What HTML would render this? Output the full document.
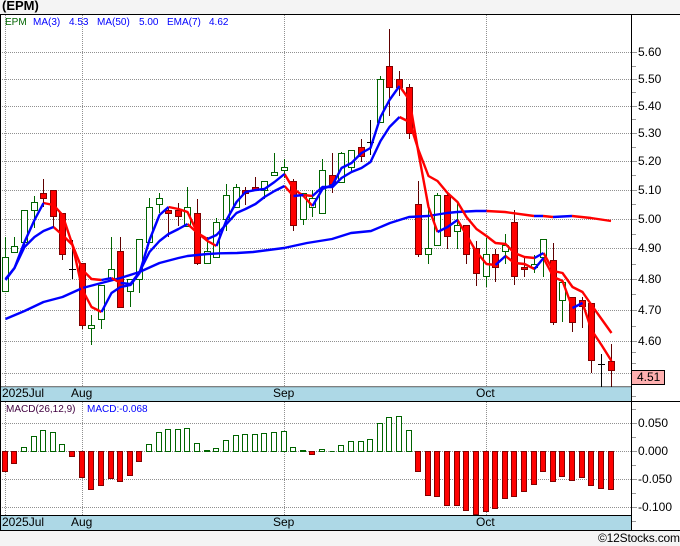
<!DOCTYPE html>
<html><head><meta charset="utf-8"><title>EPM</title>
<style>
html,body{margin:0;padding:0;background:#fff;width:680px;height:546px;overflow:hidden}
svg{display:block}
text{font-family:"Liberation Sans",Arial,sans-serif}
</style></head><body>
<svg width="680" height="546" viewBox="0 0 680 546" xmlns="http://www.w3.org/2000/svg">
<rect width="680" height="546" fill="#fff"/>
<rect width="680" height="14" fill="#f4f4f4"/>
<rect y="531" width="680" height="15" fill="#f4f4f4"/>
<text x="2" y="10" font-size="13" font-weight="bold" fill="#000">(EPM)</text>

<g stroke="#909090" stroke-width="1" stroke-dasharray="1 1" fill="none">
<path d="M0 52.5H632M0 79.5H632M0 106.5H632M0 133.5H632M0 161.5H632M0 190.5H632M0 219.5H632M0 248.5H632M0 279.5H632M0 310.5H632M0 341.5H632M0 373.5H632"/>
<path d="M0 423.5H632M0 451.5H632M0 479.5H632M0 507.5H632"/>
<path d="M5.5 15V387M82.5 15V387M284.5 15V387M486.5 15V387M5.5 402V521M82.5 402V521M284.5 402V521M486.5 402V521"/>
</g>

<!-- bands -->
<rect x="0" y="387" width="632" height="14" fill="#add8e6"/>
<rect x="0" y="515" width="632" height="15" fill="#add8e6"/>

<!-- candles -->
<path fill="none" stroke="#600000" d="M43.5 179V207M53.5 190V227M62.5 213V260M82.5 263V329M120.5 237V307M168.5 207V237M178.5 203V226M197.5 199V265M245.5 187V205M255.5 177V190M293.5 179V231M332.5 153V193M361.5 139V162M389.5 29V116M399.5 71V96M409.5 84V139M418.5 181V257M447.5 192V249M466.5 225V264M476.5 241V286M495.5 249V282M514.5 210V285M524.5 257V277M553.5 243V325M572.5 297V332M582.5 297V328M591.5 303V373M611.5 344V387"/>
<path fill="none" stroke="#006400" d="M5.5 237V291M14.5 237V253M24.5 210V245M34.5 196V228M91.5 315V345M101.5 285V329M111.5 237V280M130.5 279V307M139.5 239V293M149.5 198V242M159.5 193V213M187.5 187V226M207.5 237V263M216.5 218V257M226.5 184V231M236.5 184V207M264.5 181V199M274.5 153V175M284.5 159V178M303.5 193V225M312.5 190V217M322.5 159V213M341.5 152V183M351.5 150V172M380.5 76V122M428.5 208V264M437.5 193V245M457.5 203V249M486.5 238V287M505.5 234V264M534.5 255V273M543.5 239V277M562.5 282V322"/>
<path fill="none" stroke="#000" d="M72.5 240V279M69 269.5H76M370.5 120V155M367 142.5H374M601.5 354V387M598 364.5H605"/>
<path fill="#f00" stroke="#800000" d="M40.5 193.5h6v5h-6zM50.5 190.5h6v26h-6zM59.5 213.5h6v41h-6zM79.5 263.5h6v62h-6zM117.5 251.5h6v56h-6zM165.5 210.5h6v3h-6zM175.5 210.5h6v6h-6zM194.5 213.5h6v50h-6zM242.5 190.5h6v3h-6zM252.5 187.5h6v3h-6zM290.5 181.5h6v44h-6zM329.5 175.5h6v9h-6zM358.5 147.5h6v9h-6zM386.5 66.5h6v21h-6zM396.5 79.5h6v8h-6zM406.5 87.5h6v46h-6zM415.5 204.5h6v50h-6zM444.5 195.5h6v41h-6zM463.5 225.5h6v29h-6zM473.5 248.5h6v25h-6zM492.5 254.5h6v13h-6zM511.5 222.5h6v54h-6zM521.5 267.5h6v2h-6zM550.5 260.5h6v62h-6zM569.5 297.5h6v25h-6zM579.5 300.5h6v6h-6zM588.5 303.5h6v57h-6zM608.5 361.5h6v9h-6z"/>
<path fill="#fff" stroke="#006400" d="M2.5 257.5h6v34h-6zM11.5 246.5h6v6h-6zM21.5 210.5h6v32h-6zM31.5 202.5h6v8h-6zM88.5 325.5h6v3h-6zM98.5 285.5h6v34h-6zM108.5 269.5h6v9h-6zM127.5 279.5h6v12h-6zM136.5 239.5h6v40h-6zM146.5 207.5h6v35h-6zM156.5 198.5h6v6h-6zM184.5 207.5h6v19h-6zM204.5 251.5h6v12h-6zM213.5 222.5h6v35h-6zM223.5 195.5h6v24h-6zM233.5 187.5h6v20h-6zM261.5 181.5h6v9h-6zM271.5 172.5h6v3h-6zM281.5 167.5h6v3h-6zM300.5 193.5h6v26h-6zM309.5 198.5h6v9h-6zM319.5 170.5h6v43h-6zM338.5 153.5h6v29h-6zM348.5 150.5h6v17h-6zM377.5 79.5h6v43h-6zM425.5 248.5h6v6h-6zM434.5 195.5h6v50h-6zM454.5 225.5h6v6h-6zM483.5 254.5h6v22h-6zM502.5 245.5h6v6h-6zM531.5 264.5h6v3h-6zM540.5 239.5h6v18h-6zM559.5 282.5h6v18h-6z"/>

<!-- MA lines -->
<g fill="none" stroke-width="2.4" stroke-linejoin="round">
<g stroke="#0000ff">
<path d="M5.5 319L24.5 311L43.5 302L62.5 297L82.5 288L101.5 283L120.5 278L139.5 272L159.5 263L178.5 258L187.5 256L207.5 254L220 253.3L237 253L253 252L284 248L307 243L332 239L351 233L371 231L390 223L409 217L428 216L447 213L457 212L476 211L486.5 211M534 216L543 216M553 217L572 216"/>
</g>
<g stroke="#ff0000">
<path d="M486.5 211L505 212L534 216M543 216L553 217M572 216L591 218L611 221"/>
<path d="M53.5 227L62.5 235L72.5 245L82.5 270L91.5 279L101.5 280M111.5 278L120.5 283M187.5 224L197.5 233L207.5 239M284.5 186L293.5 196M303.5 195L312.5 196M399.5 117L409.5 122L418.5 150L428.5 176L437.5 181L447.5 193L457.5 202L466.5 217L476.5 229L486.5 236L495.5 243L505.5 244L514.5 253L524.5 257L534.5 258M543.5 253L553.5 271L562.5 273L572.5 287L582.5 292L591.5 305L601.5 319L611.5 333"/>
<path d="M43.5 203L53.5 205L62.5 215L72.5 245L82.5 290L91.5 307L101.5 312M168.5 207L178.5 209L187.5 212L197.5 233L207.5 241L216.5 246M284.5 174L293.5 189L303.5 196L312.5 206M399.5 86L409.5 100L418.5 153L428.5 207L437.5 232M457.5 220L466.5 235L476.5 252L486.5 264L495.5 265M505.5 256L514.5 263L524.5 264L534.5 269M543.5 258L553.5 277L562.5 281L572.5 308M582.5 303L591.5 330L601.5 345L611.5 361"/>
</g>
<g stroke="#0000ff">
<path d="M5.5 279L14.5 268L24.5 247L34.5 237L43.5 231L53.5 227M101.5 280L111.5 278M120.5 283L130.5 284L139.5 272L149.5 252L159.5 241L168.5 234L178.5 229L187.5 224M207.5 239L216.5 235L226.5 224L236.5 213L245.5 209L255.5 204L264.5 197L274.5 191L284.5 186M293.5 196L303.5 195M312.5 196L322.5 187L332.5 187L341.5 178L351.5 172L361.5 168L370.5 162L380.5 141L389.5 127L399.5 117M534.5 258L543.5 253"/>
<path d="M5.5 280L14.5 268L24.5 242L34.5 220L43.5 203M101.5 312L111.5 293L120.5 287L130.5 285L139.5 273L149.5 240L159.5 215L168.5 207M216.5 246L226.5 220L236.5 202L245.5 192L255.5 190L264.5 189L274.5 182L284.5 174M312.5 206L322.5 189L332.5 185L341.5 168L351.5 163L361.5 153L370.5 148L380.5 117L389.5 100L399.5 86M437.5 232L447.5 227L457.5 220M495.5 265L505.5 256M534.5 269L543.5 258M572.5 308L582.5 303"/>
</g>
</g>

<!-- MACD -->
<path fill="#f00" stroke="#800000" d="M2.5 451.5h5v20h-5zM11.5 451.5h5v12h-5zM69.5 451.5h5v5h-5zM79.5 451.5h5v26h-5zM88.5 451.5h5v38h-5zM98.5 451.5h5v34h-5zM108.5 451.5h5v27h-5zM117.5 451.5h5v30h-5zM127.5 451.5h5v24h-5zM136.5 451.5h5v10h-5zM309.5 451.5h5v3h-5zM415.5 451.5h5v20h-5zM425.5 451.5h5v44h-5zM434.5 451.5h5v45h-5zM444.5 451.5h5v54h-5zM454.5 451.5h5v54h-5zM463.5 451.5h5v59h-5zM473.5 451.5h5v63h-5zM483.5 451.5h5v60h-5zM492.5 451.5h5v57h-5zM502.5 451.5h5v47h-5zM511.5 451.5h5v45h-5zM521.5 451.5h5v40h-5zM531.5 451.5h5v33h-5zM540.5 451.5h5v20h-5zM550.5 451.5h5v30h-5zM559.5 451.5h5v25h-5zM569.5 451.5h5v29h-5zM579.5 451.5h5v26h-5zM588.5 451.5h5v34h-5zM598.5 451.5h5v37h-5zM608.5 451.5h5v38h-5z"/>
<path fill="#fff" stroke="#006400" d="M21.5 447.5h5V451.5h-5zM31.5 436.5h5V451.5h-5zM40.5 430.5h5V451.5h-5zM50.5 432.5h5V451.5h-5zM59.5 444.5h5V451.5h-5zM146.5 444.5h5V451.5h-5zM156.5 432.5h5V451.5h-5zM165.5 429.5h5V451.5h-5zM175.5 429.5h5V451.5h-5zM184.5 428.5h5V451.5h-5zM194.5 443.5h5V451.5h-5zM204.5 450.5h5V451.5h-5zM213.5 448.5h5V451.5h-5zM223.5 440.5h5V451.5h-5zM233.5 435.5h5V451.5h-5zM242.5 434.5h5V451.5h-5zM252.5 434.5h5V451.5h-5zM261.5 433.5h5V451.5h-5zM271.5 432.5h5V451.5h-5zM281.5 431.5h5V451.5h-5zM290.5 447.5h5V451.5h-5zM300.5 450.5h5V451.5h-5zM319.5 449.5h5V451.5h-5zM329.5 451.5h5V451.5h-5zM338.5 445.5h5V451.5h-5zM348.5 441.5h5V451.5h-5zM358.5 441.5h5V451.5h-5zM367.5 439.5h5V451.5h-5zM377.5 423.5h5V451.5h-5zM386.5 417.5h5V451.5h-5zM396.5 416.5h5V451.5h-5zM406.5 430.5h5V451.5h-5z"/>

<!-- frame -->
<path fill="none" stroke="#000" d="M0 14.5H680M0 401.5H680M0 515.5H632M0 530.5H680M631.5 14V530M.5 14V530"/>
<path fill="none" stroke="#000" stroke-width=".6" d="M0 386.8H632"/>
<path fill="none" stroke="#999" d="M632 52.5H637M632 79.5H637M632 106.5H637M632 133.5H637M632 161.5H637M632 190.5H637M632 219.5H637M632 248.5H637M632 279.5H637M632 310.5H637M632 341.5H637M632 66.5H636M632 92.5H636M632 119.5H636M632 147.5H636M632 175.5H636M632 204.5H636M632 234.5H636M632 264.5H636M632 294.5H636M632 326.5H636M632 352.5H636M632 363.5H636M632 396.5H636M632 423.5H637M632 451.5H637M632 479.5H637M632 507.5H637M632 409.5H636M632 437.5H636M632 465.5H636M632 493.5H636M632 521.5H636"/>

<!-- legend -->
<g font-size="10" fill="#0000ff">
<text x="5" y="25" fill="#006400">EPM</text>
<text x="33" y="25">MA(3)</text>
<text x="69" y="25">4.53</text>
<text x="97" y="25">MA(50)</text>
<text x="139" y="25">5.00</text>
<text x="167" y="25">EMA(7)</text>
<text x="209" y="25">4.62</text>
<text x="6" y="412" fill="#400040">MACD(26,12,9)</text>
<text x="87" y="412">MACD:-0.068</text>
</g>

<!-- axis labels -->
<g font-size="12" fill="#000">
<text x="638" y="56">5.60</text>
<text x="638" y="83">5.50</text>
<text x="638" y="110">5.40</text>
<text x="638" y="137">5.30</text>
<text x="638" y="165">5.20</text>
<text x="638" y="194">5.10</text>
<text x="638" y="223">5.00</text>
<text x="638" y="252">4.90</text>
<text x="638" y="283">4.80</text>
<text x="638" y="314">4.70</text>
<text x="638" y="345">4.60</text>
<text x="638" y="427">0.050</text>
<text x="638" y="455">0.000</text>
<text x="638" y="483">-0.050</text>
<text x="638" y="511">-0.100</text>
<text x="2" y="397">2025Jul</text>
<text x="71" y="397">Aug</text>
<text x="273" y="397">Sep</text>
<text x="476" y="397">Oct</text>
<text x="2" y="526">2025Jul</text>
<text x="71" y="526">Aug</text>
<text x="273" y="526">Sep</text>
<text x="476" y="526">Oct</text>
</g>
<rect x="631.5" y="370.5" width="33" height="14" fill="#ffb0b0" stroke="#000"/>
<text x="637" y="381" font-size="12" fill="#000">4.51</text>
<text x="598" y="542" font-size="12" fill="#000" textLength="82" lengthAdjust="spacing">©12Stocks.com</text>
</svg>
</body></html>
